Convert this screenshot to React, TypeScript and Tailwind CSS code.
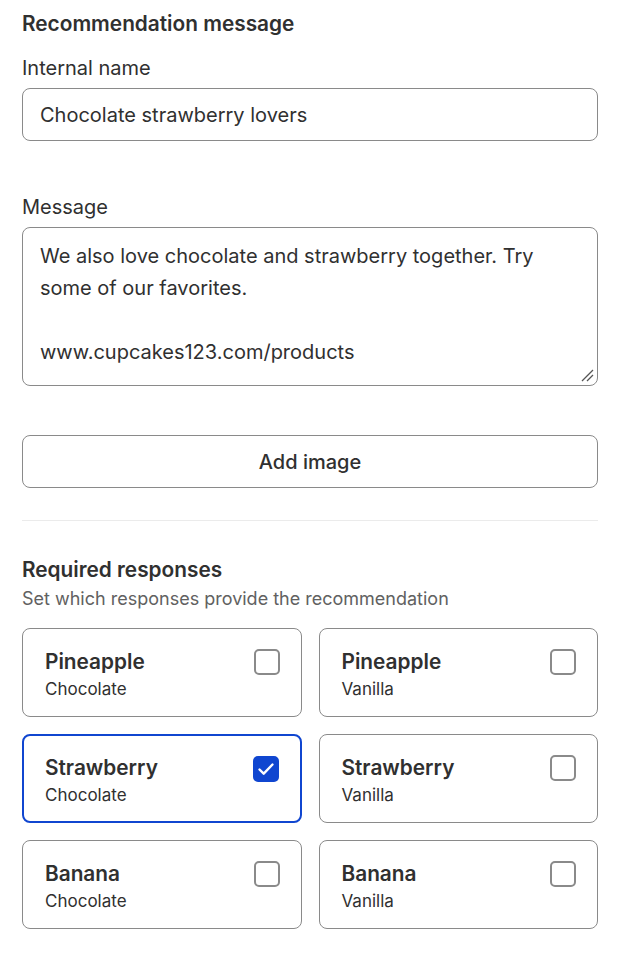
import React from "react";

const options = [
  { title: "Pineapple", sub: "Chocolate", checked: false },
  { title: "Pineapple", sub: "Vanilla", checked: false },
  { title: "Strawberry", sub: "Chocolate", checked: true },
  { title: "Strawberry", sub: "Vanilla", checked: false },
  { title: "Banana", sub: "Chocolate", checked: false },
  { title: "Banana", sub: "Vanilla", checked: false },
];

const Check = ({ checked }: { checked: boolean }) =>
  checked ? (
    <div className="w-[26px] h-[26px] rounded-[5px] bg-[#1046d0] flex items-center justify-center">
      <svg width="22" height="22" viewBox="0 0 22 22" fill="none">
        <path d="M4.5 11.5l4.2 4.2 8.8-9.2" stroke="white" strokeWidth="2.4" strokeLinecap="round" strokeLinejoin="round" />
      </svg>
    </div>
  ) : (
    <div className="w-[26px] h-[26px] rounded-[5px] border-2 border-[#8a8a8a] bg-white" />
  );

export default function App() {
  return (
    <div className="w-[626px] min-h-[976px] bg-white pl-[22px] pr-[28px] pt-[10px] text-[#303030]" style={{ fontFamily: "Inter, 'Liberation Sans', sans-serif" }}>
      {/* message */}
      <h2 className="text-[20.8px] leading-[28px] font-semibold">Recommendation message</h2>
      <label className="block mt-[16px] text-[20px] leading-[28px]">Internal name</label>
      <div className="mt-[6px] h-[53px] border border-[#8a8a8a] rounded-[8px] px-[17px] flex items-center text-[20px]">
        Chocolate strawberry lovers
      </div>

      <label className="block mt-[52px] text-[20px] leading-[28px]">Message</label>
      <div className="relative mt-[6px] h-[159px] border border-[#8a8a8a] rounded-[8px] px-[17px] pt-[12px] text-[20px] leading-[32px]">
        <p>We also love chocolate and strawberry together. Try some of our favorites.</p>
        <p className="mt-[32px]">www.cupcakes123.com/products</p>
        <svg className="absolute right-[3px] bottom-[3px]" width="14" height="14" viewBox="0 0 14 14">
          <path d="M2 13L13 2M7 13L13 7" stroke="#555" strokeWidth="1.3" />
        </svg>
      </div>

      <button className="mt-[49px] w-full h-[53px] border border-[#8a8a8a] rounded-[8px] text-[20px] font-medium bg-white">
        Add image
      </button>

      <hr className="mt-[32px] border-t border-[#ebebeb]" />

      {/* responses */}
      <h2 className="mt-[35px] text-[20.8px] leading-[28px] font-semibold">Required responses</h2>
      <p className="mt-[2px] text-[18px] leading-[26px] text-[#616161]">Set which responses provide the recommendation</p>

      <div className="mt-[16px] grid grid-cols-2 gap-[17px]">
        {options.map((o, i) => (
          <div
            key={i}
            className={`h-[89px] rounded-[8px] border pl-[22px] pr-[21px] pt-[20px] flex justify-between ${
              o.checked ? "border-2 border-[#1046d0] pl-[21px] pr-[20px] pt-[19px]" : "border-[#8a8a8a]"
            }`}
          >
            <div className={o.checked ? "-mt-[1px] -ml-[1px]" : ""}>
              <div className="text-[20.8px] leading-[26px] font-semibold">{o.title}</div>
              <div className="text-[17px] leading-[28px]">{o.sub}</div>
            </div>
            <Check checked={o.checked} />
          </div>
        ))}
      </div>
    </div>
  );
}
